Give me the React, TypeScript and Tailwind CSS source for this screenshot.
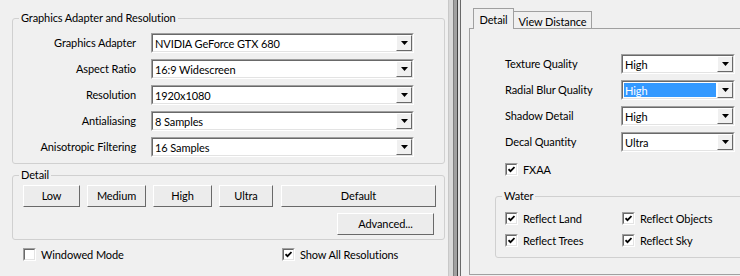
import type { ReactNode } from "react";

const ADAPTER_ROWS = [
  { label: "Graphics Adapter", value: "NVIDIA GeForce GTX 680" },
  { label: "Aspect Ratio", value: "16:9 Widescreen" },
  { label: "Resolution", value: "1920x1080" },
  { label: "Antialiasing", value: "8 Samples" },
  { label: "Anisotropic Filtering", value: "16 Samples" },
];

const DETAIL_ROWS = [
  { label: "Texture Quality", value: "High" },
  { label: "Radial Blur Quality", value: "High", selected: true },
  { label: "Shadow Detail", value: "High" },
  { label: "Decal Quantity", value: "Ultra" },
];

function Group({
  title,
  className,
  children,
}: {
  title: string;
  className: string;
  children: ReactNode;
}) {
  return (
    <div className={`relative rounded-[3px] border border-[#d0d0d0] ${className}`}>
      <span className="absolute -top-[9px] left-[6px] bg-[#f0f0f0] px-[2px] leading-[16px]">
        {title}
      </span>
      {children}
    </div>
  );
}

function Combo({
  value,
  width,
  selected,
}: {
  value: string;
  width: string;
  selected?: boolean;
}) {
  return (
    <div
      className={`flex h-[20px] border border-t-[#a0a0a0] border-l-[#a0a0a0] border-b-white border-r-white ${width}`}
    >
      <div className="flex flex-1 border border-t-[#696969] border-l-[#696969] border-b-[#e3e3e3] border-r-[#e3e3e3] bg-white">
        <div
          className={`m-[1px] flex flex-1 items-center pl-[1px] leading-none ${
            selected ? "bg-[#3399ff] text-white" : ""
          }`}
        >
          {value}
        </div>
        {/* drop button */}
        <div className="flex w-[16px] items-center justify-center border border-t-white border-l-white border-b-[#696969] border-r-[#696969] bg-[#f0f0f0]">
          <svg width="7" height="4" viewBox="0 0 7 4">
            <path d="M0 0h7L3.5 4z" fill="#000" />
          </svg>
        </div>
      </div>
    </div>
  );
}

function Check({ label, checked, className }: { label: string; checked?: boolean; className?: string }) {
  return (
    <div className={`flex h-[13px] items-center ${className ?? ""}`}>
      <div className="h-[13px] w-[13px] border border-t-[#a0a0a0] border-l-[#a0a0a0] border-b-white border-r-white">
        <div className="flex h-full w-full items-center justify-center border border-t-[#696969] border-l-[#696969] border-b-[#e3e3e3] border-r-[#e3e3e3] bg-white">
          {checked && (
            <svg width="7" height="7" viewBox="0 0 7 7">
              <path d="M0.5 3.2 2.5 5.2 6.5 1" stroke="#000" strokeWidth="1.8" fill="none" />
            </svg>
          )}
        </div>
      </div>
      <span className="ml-[5px] leading-none">{label}</span>
    </div>
  );
}

function Btn({ children, className }: { children: ReactNode; className: string }) {
  return (
    <div
      className={`flex h-[22px] items-center justify-center border border-t-white border-l-white border-b-[#696969] border-r-[#696969] bg-[#ececec] ${className}`}
    >
      {children}
    </div>
  );
}

export default function App() {
  return (
    <div className="flex h-[276px] w-[740px] overflow-hidden bg-[#f0f0f0] font-['Lato',sans-serif] text-[11px] tracking-[-0.1px] text-black">
      {/* left window */}
      <div className="w-[446px] shrink-0 pl-[12px]">
        <Group title="Graphics Adapter and Resolution" className="mt-[18px] h-[146px] w-[433px] pt-[14px]">
          <div className="flex flex-col gap-[6px]">
            {ADAPTER_ROWS.map((r) => (
              <div key={r.label} className="flex h-[20px] items-center">
                <span className="w-[123px] text-right">{r.label}</span>
                <div className="ml-[15px]">
                  <Combo value={r.value} width="w-[263px]" />
                </div>
              </div>
            ))}
          </div>
        </Group>

        <Group title="Detail" className="mt-[11px] h-[65px] w-[433px] pl-[10px] pt-[9px]">
          <div className="flex gap-[7px]">
            <Btn className="w-[57px]">Low</Btn>
            <Btn className="w-[59px]">Medium</Btn>
            <Btn className="w-[59px]">High</Btn>
            <Btn className="w-[54px]">Ultra</Btn>
            <Btn className="ml-[1px] w-[155px]">Default</Btn>
          </div>
          <Btn className="ml-[314px] mt-[6px] w-[97px]">Advanced...</Btn>
        </Group>

        <div className="mt-[8px] flex">
          <Check label="Windowed Mode" className="ml-[11px] w-[259px]" />
          <Check label="Show All Resolutions" checked />
        </div>
      </div>

      {/* window frames */}
      <div className="flex h-full shrink-0">
        <div className="w-[2px] bg-[#f0f0f0]" />
        <div className="w-[1px] bg-[#c8c8c8]" />
        <div className="w-[4px] bg-[#d8d8d8]" />
        <div className="w-[1px] bg-[#808080]" />
        <div className="w-[3px] bg-[#a0a0a0]" />
        <div className="w-[1px] bg-[#404040]" />
        <div className="w-[2px] bg-[#e0e0e0]" />
        <div className="w-[1px] bg-[#696969]" />
      </div>

      {/* right window */}
      <div className="shrink-0 pl-[8px] pt-[8px]">
        <div className="flex h-[20px] items-end pl-[4px]">
          <div className="relative z-10 -mb-[1px] flex h-[21px] w-[41px] items-start justify-center border border-b-0 border-[#a0a0a0] bg-[#f0f0f0] pt-[3px]">
            Detail
          </div>
          <div className="flex h-[17px] w-[78px] items-start justify-center border border-b-0 border-l-0 border-[#a0a0a0] pt-[2px]">
            View Distance
          </div>
        </div>
        <div className="h-[247px] w-[300px] border border-[#a0a0a0] pl-[35px] pt-[25px]">
          <div className="flex flex-col gap-[6px]">
            {DETAIL_ROWS.map((r) => (
              <div key={r.label} className="flex h-[20px] items-center">
                <span className="w-[116px]">{r.label}</span>
                <Combo value={r.value} width="w-[114px]" selected={r.selected} />
              </div>
            ))}
          </div>
          <Check label="FXAA" checked className="mt-[11px]" />
          <Group title="Water" className="-ml-[10px] mt-[20px] h-[62px] w-[300px] pl-[9px] pt-[15px]">
            <div className="grid grid-cols-[117px_1fr] gap-y-[9px]">
              <Check label="Reflect Land" checked />
              <Check label="Reflect Objects" checked />
              <Check label="Reflect Trees" checked />
              <Check label="Reflect Sky" checked />
            </div>
          </Group>
        </div>
      </div>
    </div>
  );
}
